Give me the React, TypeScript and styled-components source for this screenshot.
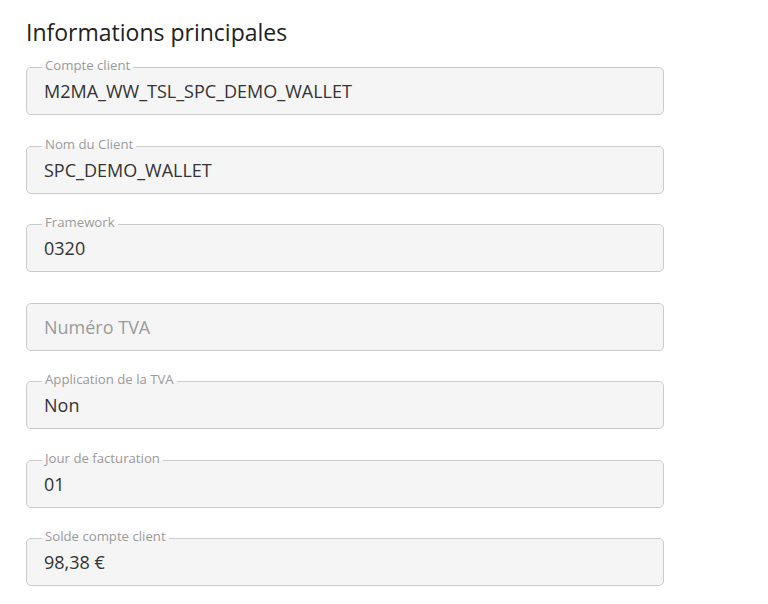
import React from "react";
import styled, { createGlobalStyle } from "styled-components";

interface FieldData {
   label?: string;
   value: string;
}

const fields: FieldData[] = [
   { label: "Compte client", value: "M2MA_WW_TSL_SPC_DEMO_WALLET" },
   { label: "Nom du Client", value: "SPC_DEMO_WALLET" },
   { label: "Framework", value: "0320" },
   { value: "Numéro TVA" },
   { label: "Application de la TVA", value: "Non" },
   { label: "Jour de facturation", value: "01" },
   { label: "Solde compte client", value: "98,38 €" },
];

function App() {
   return (
      <>
         <GlobalStyle />
         <Page>
            <Title>Informations principales</Title>
            <FieldList>
               {fields.map((field) => (
                  <Field key={field.value}>
                     {field.label && <FloatingLabel>{field.label}</FloatingLabel>}
                     <Value placeholder={!field.label}>{field.value}</Value>
                  </Field>
               ))}
            </FieldList>
         </Page>
      </>
   );
}

export default App;

const GlobalStyle = createGlobalStyle`
   body {
      margin: 0;
      background: #ffffff;
      font-family: "Open Sans", "Noto Sans", sans-serif;
   }
`;

const Page = styled.div`
   width: 638px;
   padding: 17px 0 0 26px;
`;

const Title = styled.h2`
   margin: 0 0 20px;
   font-size: 23px;
   line-height: 30px;
   font-weight: 400;
   color: #222222;
`;

const FieldList = styled.div`
   display: flex;
   flex-direction: column;
   gap: 30.5px;
`;

const Field = styled.div`
   position: relative;
   box-sizing: border-box;
   height: 48px;
   display: flex;
   align-items: center;
   padding: 0 16px 0 17px;
   border: 1px solid #cbcbcb;
   border-radius: 5px;
   background: #f5f5f5;
`;

const FloatingLabel = styled.span`
   position: absolute;
   top: -10px;
   left: 15px;
   padding: 0 3px;
   font-size: 13.2px;
   line-height: 14px;
   color: #9a9a9a;
   background: linear-gradient(to bottom, #ffffff 9px, #f5f5f5 9px);
`;

type ValueProps = {
   placeholder: boolean;
};

const Value = styled.span<ValueProps>`
   font-size: 18px;
   line-height: 24px;
   color: ${({ placeholder }) => (placeholder ? "#9a9a9a" : "#333333")};
`;
